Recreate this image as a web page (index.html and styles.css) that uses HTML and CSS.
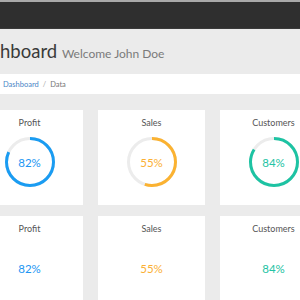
FILE: index.html
```html
<!DOCTYPE html>
<html>
<head>
<meta charset="utf-8">
<link rel="stylesheet" href="styles.css">
</head>
<body>
<nav class="topbar"></nav>
<div class="page">
  <header class="page-header">
    <h1 class="title">Dashboard <small class="subtitle">Welcome John Doe</small></h1>
  </header>
  <ol class="breadcrumb">
    <li class="crumb crumb-link">Dashboard</li>
    <li class="crumb-sep">/</li>
    <li class="crumb">Data</li>
  </ol>
  <div class="grid">
    <div class="card">
      <div class="card-title">Profit</div>
      <div class="ring blue">
        <svg class="ring-svg" viewBox="0 0 50 50"><circle class="track" cx="25" cy="25" r="23.5"/><circle class="bar" cx="25" cy="25" r="23.5" pathLength="100" stroke-dasharray="82 100"/></svg>
        <span class="ring-value">82%</span>
      </div>
    </div>
    <div class="card">
      <div class="card-title">Sales</div>
      <div class="ring orange">
        <svg class="ring-svg" viewBox="0 0 50 50"><circle class="track" cx="25" cy="25" r="23.5"/><circle class="bar" cx="25" cy="25" r="23.5" pathLength="100" stroke-dasharray="55 100"/></svg>
        <span class="ring-value">55%</span>
      </div>
    </div>
    <div class="card">
      <div class="card-title">Customers</div>
      <div class="ring teal">
        <svg class="ring-svg" viewBox="0 0 50 50"><circle class="track" cx="25" cy="25" r="23.5"/><circle class="bar" cx="25" cy="25" r="23.5" pathLength="100" stroke-dasharray="84 100"/></svg>
        <span class="ring-value">84%</span>
      </div>
    </div>
    <div class="card">
      <div class="card-title">Profit</div>
      <div class="ring blue plain"><span class="ring-value">82%</span></div>
    </div>
    <div class="card">
      <div class="card-title">Sales</div>
      <div class="ring orange plain"><span class="ring-value">55%</span></div>
    </div>
    <div class="card">
      <div class="card-title">Customers</div>
      <div class="ring teal plain"><span class="ring-value">84%</span></div>
    </div>
  </div>
</div>
</body>
</html>
```
FILE: styles.css
```css
html, body {
  margin: 0;
  padding: 0;
  background: #ebebeb;
  font-family: "Lato", "Open Sans", sans-serif;
  overflow: hidden;
}
.topbar {
  height: 26px;
  background: #2f2f2f;
  border-top: 2px solid #a9a9a9;
  border-bottom: 1px solid #3a3a3a;
}
.page {
  margin-left: -39px;
  width: 400px;
}
.page-header {
  height: 45px;
  display: flex;
  align-items: center;
  padding-left: 8px;
}
.title {
  margin: 0;
  font-weight: 400;
  font-size: 18.5px;
  color: #3a3a3a;
  line-height: 1;
}
.subtitle {
  font-size: 12px;
  color: #7a7a7a;
}
.breadcrumb {
  list-style: none;
  margin: 0;
  height: 20px;
  background: #fff;
  padding: 0 0 0 42px;
  display: flex;
  align-items: center;
  gap: 4px;
  font-size: 7.5px;
  color: #777;
}
.crumb-link { color: #4a86c5; }
.crumb-sep { color: #aaa; }
.grid {
  display: grid;
  grid-template-columns: repeat(3, 107px);
  column-gap: 15px;
  row-gap: 11px;
  padding: 16px 0 0 15px;
}
.card {
  background: #fff;
  height: 95px;
  display: flex;
  flex-direction: column;
  align-items: center;
}
.card-title {
  margin-top: 8px;
  font-size: 9px;
  color: #555;
  line-height: 10px;
}
.ring {
  margin-top: 9px;
  width: 50px;
  height: 50px;
  position: relative;
  display: flex;
  align-items: center;
  justify-content: center;
}
.ring-svg {
  position: absolute;
  inset: 0;
  width: 50px;
  height: 50px;
  transform: rotate(-90deg);
}
.track {
  fill: none;
  stroke: #ececec;
  stroke-width: 3;
}
.bar {
  fill: none;
  stroke-width: 3;
}
.ring-value {
  position: relative;
  font-size: 11.5px;
}
.blue .bar { stroke: #1a9cf2; }
.blue .ring-value { color: #2196f3; }
.orange .bar { stroke: #fbb231; }
.orange .ring-value { color: #fbb034; }
.teal .bar { stroke: #1dc3a3; }
.teal .ring-value { color: #23c3a4; }
```
